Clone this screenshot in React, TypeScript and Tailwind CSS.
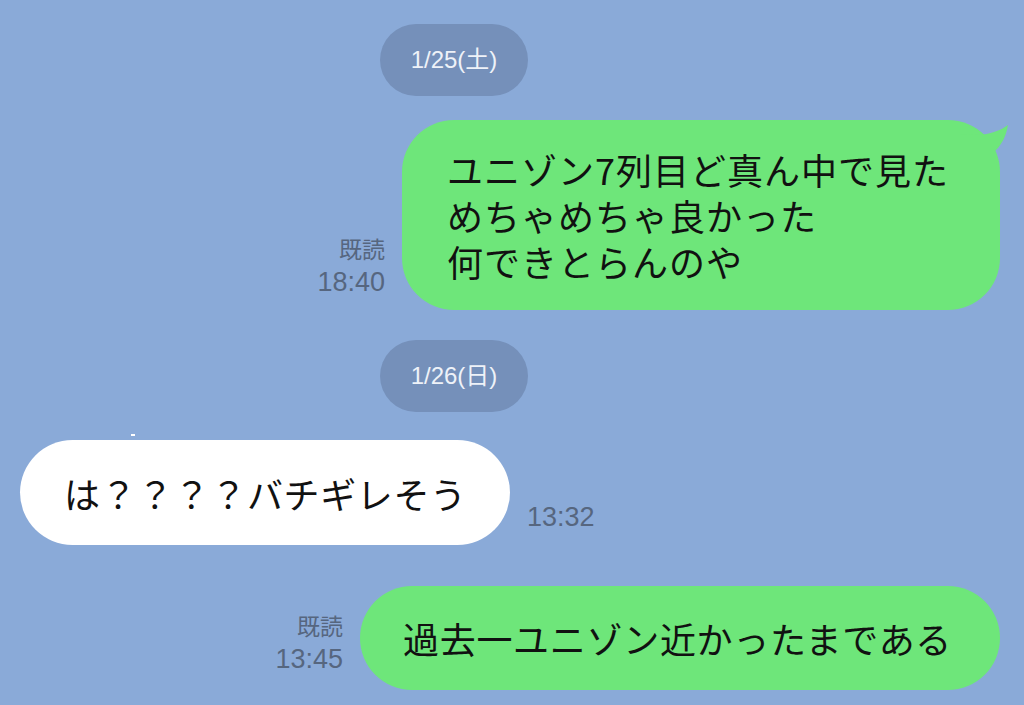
import React from "react";

const jp = { fontFamily: '"Noto Sans CJK JP", "Noto Sans", sans-serif' };
const num = { fontFamily: '"Liberation Sans", "Noto Sans CJK JP", sans-serif' };

function DatePill({ label }: { label: string }) {
  return (
    <div className="pl-[380px]">
      <div
        className="w-[148px] h-[72px] rounded-full bg-[#7590ba] flex items-center justify-center text-[24px] text-[#eef2f8]"
        style={num}
      >
        {label}
      </div>
    </div>
  );
}

function Meta({ read, time }: { read?: boolean; time: string }) {
  return (
    <div className="flex flex-col items-end text-[#56667f] leading-none">
      {read && (
        <span className="text-[23px] mb-[9px]" style={jp}>
          既読
        </span>
      )}
      <span className="text-[27px]" style={num}>
        {time}
      </span>
    </div>
  );
}

export default function App() {
  return (
    <div className="w-[1024px] h-[705px] bg-[#8aaad8] overflow-hidden flex flex-col pt-[24px]">
      <DatePill label="1/25(土)" />

      <div className="mt-[24px] flex justify-end items-end pr-[24px] gap-[17px]">
        <div className="mb-[14px]">
          <Meta read time="18:40" />
        </div>
        <div className="relative">
          <div
            className="w-[598px] h-[190px] rounded-[52px] bg-[#6ee67a] px-[45px] py-[26px] text-[36px] leading-[46px] tracking-[1px] text-[#111]"
            style={jp}
          >
            <div>ユニゾン7列目ど真ん中で見た</div>
            <div>めちゃめちゃ良かった</div>
            <div>何できとらんのや</div>
          </div>
          <svg
            className="absolute right-[-10px] top-[2px]"
            width="50"
            height="40"
            viewBox="0 0 50 40"
          >
            <path
              d="M0 12 C14 14 26 13 34 10 C40 8 44 6 48 3 C46 14 42 22 36 28 L24 40 L0 40 Z"
              fill="#6ee67a"
            />
          </svg>
        </div>
      </div>

      <div className="mt-[30px]">
        <DatePill label="1/26(日)" />
      </div>

      <div className="h-[2px] w-[4px] bg-white ml-[131px] mt-[22px]" />

      <div className="mt-[4px] flex items-end pl-[20px] gap-[17px]">
        <div
          className="w-[490px] h-[105px] rounded-full bg-white pl-[44px] flex items-center text-[36px] tracking-[0.6px] text-[#111]"
          style={jp}
        >
          は？？？？バチギレそう
        </div>
        <div className="mb-[14px]">
          <Meta time="13:32" />
        </div>
      </div>

      <div className="mt-[41px] flex justify-end items-end pr-[24px] gap-[17px]">
        <div className="mb-[17px]">
          <Meta read time="13:45" />
        </div>
        <div
          className="w-[640px] h-[104px] rounded-full bg-[#6ee67a] pl-[43px] flex items-center text-[36px] tracking-[0.7px] text-[#111]"
          style={jp}
        >
          過去一ユニゾン近かったまである
        </div>
      </div>
    </div>
  );
}
